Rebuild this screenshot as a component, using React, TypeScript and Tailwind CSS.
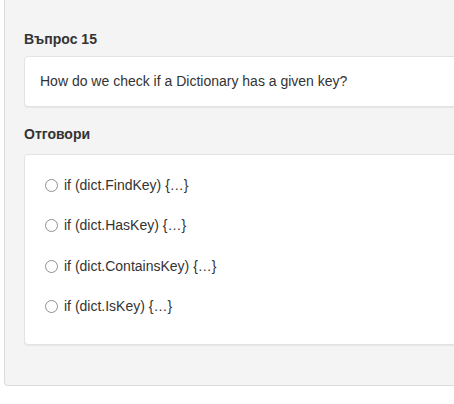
import React from "react";

const answers = [
  "if (dict.FindKey) {…}",
  "if (dict.HasKey) {…}",
  "if (dict.ContainsKey) {…}",
  "if (dict.IsKey) {…}",
];

export default function App() {
  return (
    <div
      className="w-[454px] h-[404px] bg-white overflow-hidden pl-[4px] text-[#333]"
      style={{ fontFamily: '"Liberation Sans", Arial, sans-serif' }}
    >
      <div className="w-[480px] bg-[#f4f4f4] border-x border-b border-[#dcdcdc] rounded-b-[4px] pt-[30px] pl-[19px] pr-[10px] pb-[40px]">
        <div className="h-[18px] leading-[18px] text-[14px] font-bold">Въпрос 15</div>
        <div className="mt-[8px] h-[51px] flex items-center bg-white border border-[#e3e3e3] rounded-[4px] shadow-[0_1px_1px_rgba(0,0,0,0.06)] pl-[15px] text-[14px]">
          How do we check if a Dictionary has a given key?
        </div>
        <div className="mt-[18px] h-[18px] leading-[18px] text-[14px] font-bold">Отговори</div>
        <div className="mt-[11px] bg-white border border-[#e3e3e3] rounded-[4px] shadow-[0_1px_1px_rgba(0,0,0,0.06)] pt-[10px] pb-[17px] pl-[20px]">
          {answers.map((a) => (
            <label key={a} className="h-[40.5px] flex items-center text-[14px]">
              <span className="w-[13px] h-[13px] rounded-full border border-[#8f8f8f] bg-white shrink-0" />
              <span className="ml-[6px]">{a}</span>
            </label>
          ))}
        </div>
      </div>
    </div>
  );
}
